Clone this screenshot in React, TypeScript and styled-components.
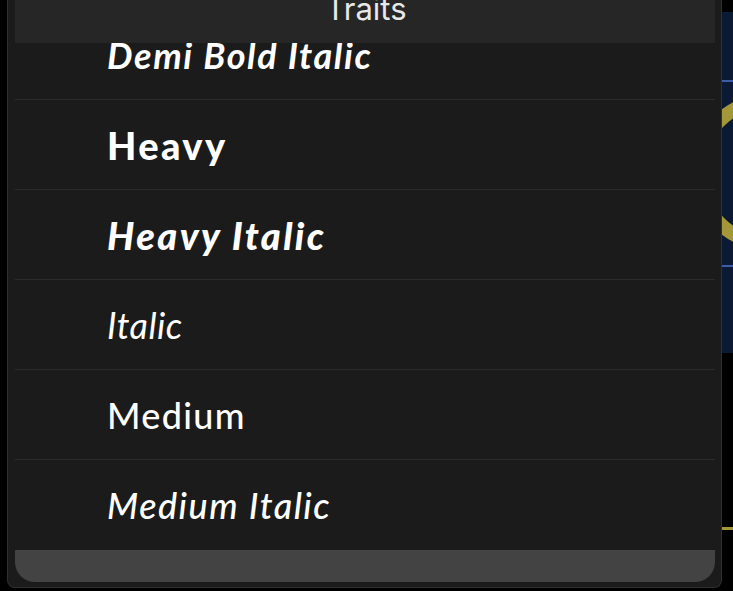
import React from "react";
import styled, { createGlobalStyle } from "styled-components";

const Global = createGlobalStyle`
  html, body { margin: 0; padding: 0; background: #000; overflow: hidden; }
  #root { width: 733px; height: 591px; }
  * { box-sizing: border-box; }
`;

const Page = styled.div`
  display: flex;
  width: 733px;
  height: 591px;
  padding-left: 7px;
  background: #000;
  overflow: hidden;
`;

const Panel = styled.div`
  width: 715px;
  height: 588px;
  flex: none;
  display: flex;
  flex-direction: column;
  background: #1b1b1b;
  border: 1px solid #303030;
  border-top: none;
  border-radius: 0 0 8px 8px;
  padding: 0 6px 5px 7px;
`;

const Header = styled.div`
  height: 43px;
  flex: none;
  background: #262626;
  display: flex;
  justify-content: center;
  align-items: flex-start;
  overflow: hidden;
`;

const Title = styled.div`
  font-family: "Inter", "Liberation Sans", sans-serif;
  font-size: 31px;
  line-height: 31px;
  font-weight: 400;
  color: #e8e8e8;
  margin-top: -7px;
  margin-left: 2px;
`;

const List = styled.div`
  flex: 1;
  overflow: hidden;
`;

const ListInner = styled.div`
  margin-top: -33px;
`;

const Row = styled.div<{ $weight: number; $italic?: boolean; $tracking: number; $size: number }>`
  height: 90px;
  display: flex;
  align-items: center;
  padding-left: 92px;
  border-bottom: 1px solid #2b2b2b;
  font-family: "Lato", "Noto Sans", sans-serif;
  font-size: ${(p) => p.$size}px;
  color: #fff;
  font-weight: ${(p) => p.$weight};
  font-style: ${(p) => (p.$italic ? "italic" : "normal")};
  letter-spacing: ${(p) => p.$tracking}px;
  &:last-child { border-bottom: none; }
`;

const Footer = styled.div`
  height: 32px;
  flex: none;
  background: #434343;
  border-radius: 0 0 20px 20px;
`;

const Side = styled.div`
  flex: 1;
  display: flex;
`;

const rows: { label: string; weight: number; italic?: boolean; tracking: number; size: number }[] = [
  { label: "Demi Bold Italic", weight: 700, italic: true, tracking: 1.6, size: 36 },
  { label: "Heavy", weight: 900, tracking: 2.4, size: 38 },
  { label: "Heavy Italic", weight: 900, italic: true, tracking: 2.4, size: 38 },
  { label: "Italic", weight: 400, italic: true, tracking: 0.5, size: 36 },
  { label: "Medium", weight: 500, tracking: 1.3, size: 36 },
  { label: "Medium Italic", weight: 500, italic: true, tracking: 1.5, size: 36 },
];

export default function App() {
  return (
    <>
      <Global />
      <Page>
        <Panel>
          <Header>
            <Title>Traits</Title>
          </Header>
          <List>
            <ListInner>
              {rows.map((r) => (
                <Row
                  key={r.label}
                  $weight={r.weight}
                  $italic={r.italic}
                  $tracking={r.tracking}
                  $size={r.size}
                >
                  {r.label}
                </Row>
              ))}
            </ListInner>
          </List>
          <Footer />
        </Panel>
        <Side>
          <svg width="11" height="591" viewBox="0 0 11 591">
            <rect x="0" y="12" width="11" height="341" fill="#0b1a34" />
            <rect x="0" y="80" width="11" height="2" fill="#3b5ca6" />
            <rect x="0" y="265" width="11" height="2" fill="#3b5ca6" />
            <circle cx="48" cy="172" r="72" fill="none" stroke="#a39838" strokeWidth="14" />
            <rect x="0" y="527" width="11" height="3" fill="#a39838" />
          </svg>
        </Side>
      </Page>
    </>
  );
}
